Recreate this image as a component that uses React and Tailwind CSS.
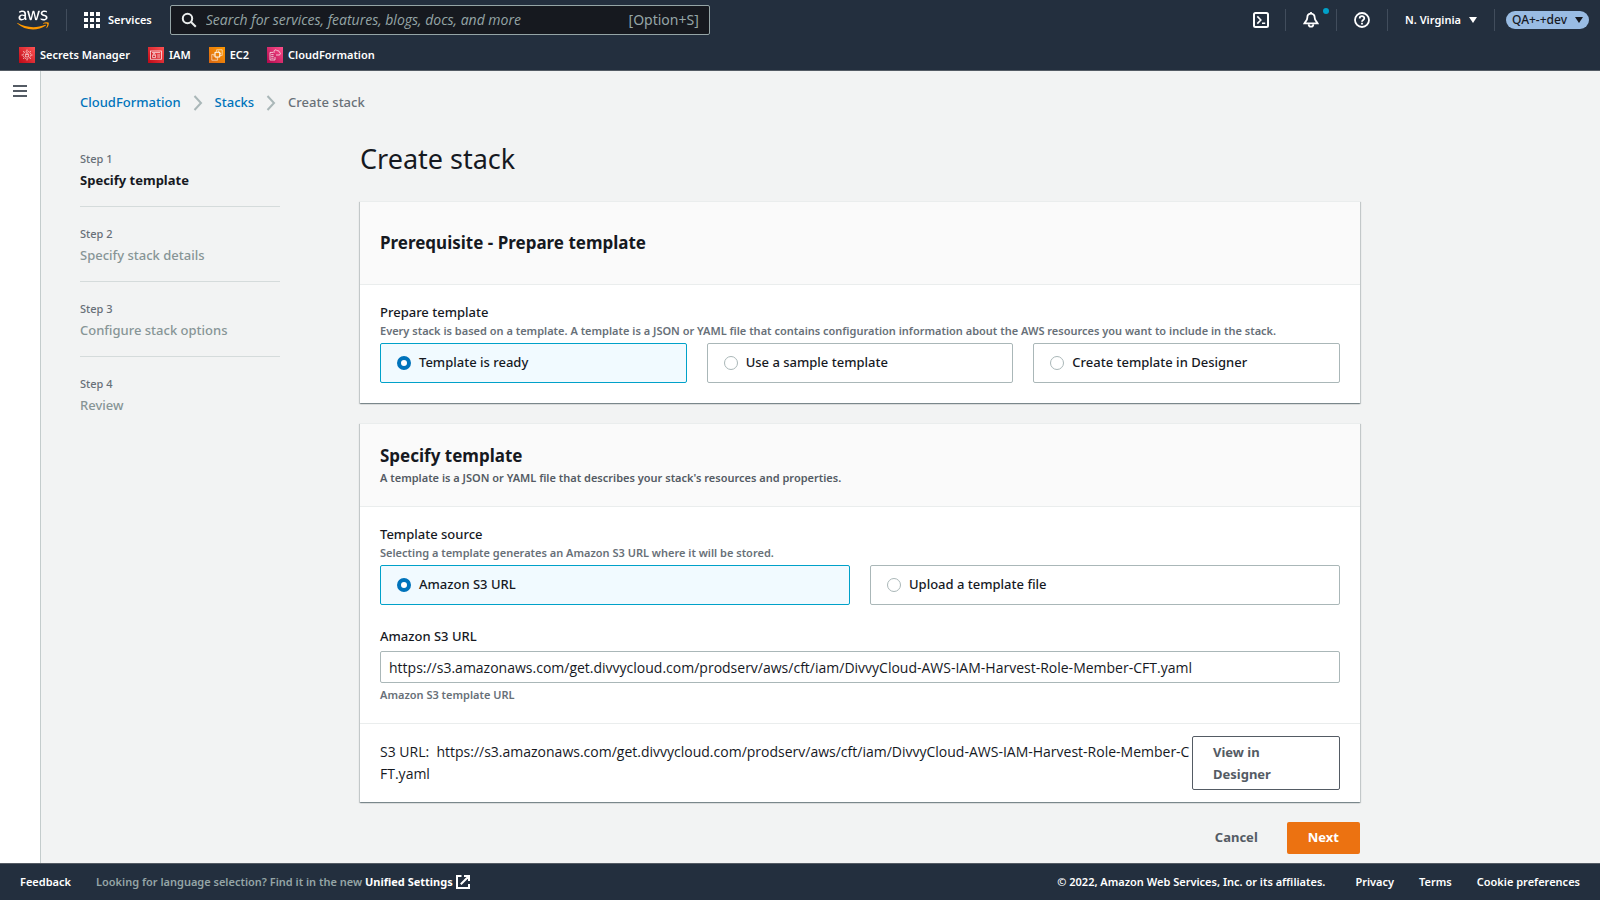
import React, { useState } from "react";

const TEMPLATE_URL =
  "https://s3.amazonaws.com/get.divvycloud.com/prodserv/aws/cft/iam/DivvyCloud-AWS-IAM-Harvest-Role-Member-CFT.yaml";

function AwsLogo() {
  return (
    <svg viewBox="0 0 304 182" className="h-[20px] w-[32px]" aria-hidden="true">
      <path
        fill="#fff"
        d="M86.4 66.4c0 3.7.4 6.7 1.1 8.9.8 2.2 1.8 4.6 3.2 7.2.5.8.7 1.6.7 2.3 0 1-.6 2-1.9 3l-6.3 4.2c-.9.6-1.8.9-2.6.9-1 0-2-.5-3-1.4-1.4-1.5-2.6-3.1-3.6-4.7-1-1.7-2-3.6-3.1-5.9-7.8 9.2-17.6 13.8-29.4 13.8-8.4 0-15.1-2.4-20-7.2-4.9-4.8-7.4-11.2-7.4-19.2 0-8.5 3-15.4 9.1-20.6 6.1-5.2 14.2-7.8 24.5-7.8 3.4 0 6.9.3 10.6.8 3.7.5 7.5 1.3 11.5 2.2v-7.3c0-7.6-1.6-12.9-4.7-16-3.2-3.1-8.6-4.6-16.3-4.6-3.5 0-7.1.4-10.8 1.3-3.7.9-7.3 2-10.8 3.4-1.6.7-2.8 1.1-3.5 1.3-.7.2-1.2.3-1.6.3-1.4 0-2.1-1-2.1-3.1v-4.9c0-1.6.2-2.8.7-3.5.5-.7 1.4-1.4 2.8-2.1 3.5-1.8 7.7-3.3 12.6-4.5C41 1.9 46.2 1.3 51.7 1.3c11.9 0 20.6 2.7 26.2 8.1 5.5 5.4 8.3 13.6 8.3 24.6v32.4zM45.8 81.6c3.3 0 6.7-.6 10.3-1.8 3.6-1.2 6.8-3.4 9.5-6.4 1.6-1.9 2.8-4 3.4-6.4.6-2.4 1-5.3 1-8.7v-4.2c-2.9-.7-6-1.3-9.2-1.7-3.2-.4-6.3-.6-9.4-.6-6.7 0-11.6 1.3-14.9 4-3.3 2.7-4.9 6.5-4.9 11.5 0 4.7 1.2 8.2 3.7 10.6 2.4 2.5 5.9 3.7 10.5 3.7zm80.3 10.8c-1.8 0-3-.3-3.8-1-.8-.6-1.5-2-2.1-3.9L96.7 10.2c-.6-2-.9-3.3-.9-4 0-1.6.8-2.5 2.4-2.5h9.8c1.9 0 3.2.3 3.9 1 .8.6 1.4 2 2 3.9l16.8 66.2 15.6-66.2c.5-2 1.1-3.3 1.9-3.9.8-.6 2.2-1 4-1h8c1.9 0 3.2.3 4 1 .8.6 1.5 2 1.9 3.9l15.8 67 17.3-67c.6-2 1.3-3.3 2-3.9.8-.6 2.1-1 3.9-1h9.3c1.6 0 2.5.8 2.5 2.5 0 .5-.1 1-.2 1.6-.1.6-.3 1.4-.7 2.5l-24.1 77.3c-.6 2-1.3 3.3-2.1 3.9-.8.6-2.1 1-3.8 1h-8.6c-1.9 0-3.2-.3-4-1-.8-.7-1.5-2-1.9-4L156 23l-15.4 64.4c-.5 2-1.1 3.3-1.9 4-.8.7-2.2 1-4 1zm128.5 2.7c-5.2 0-10.4-.6-15.4-1.8-5-1.2-8.9-2.5-11.5-4-1.6-.9-2.7-1.9-3.1-2.8-.4-.9-.6-1.9-.6-2.8v-5.1c0-2.1.8-3.1 2.3-3.1.6 0 1.2.1 1.8.3.6.2 1.5.6 2.5 1 3.4 1.5 7.1 2.7 11 3.5 4 .8 7.9 1.2 11.9 1.2 6.3 0 11.2-1.1 14.6-3.3 3.4-2.2 5.2-5.4 5.2-9.5 0-2.8-.9-5.1-2.7-7-1.8-1.9-5.2-3.6-10.1-5.2L246 52c-7.3-2.3-12.7-5.7-16-10.2-3.3-4.4-5-9.3-5-14.5 0-4.2.9-7.9 2.7-11.1 1.8-3.2 4.2-6 7.2-8.2 3-2.3 6.4-4 10.4-5.2 4-1.2 8.2-1.7 12.6-1.7 2.2 0 4.5.1 6.7.4 2.3.3 4.4.7 6.5 1.1 2 .5 3.9 1 5.7 1.6 1.8.6 3.2 1.2 4.2 1.8 1.4.8 2.4 1.6 3 2.5.6.8.9 1.9.9 3.3v4.7c0 2.1-.8 3.2-2.3 3.2-.8 0-2.1-.4-3.8-1.2-5.7-2.6-12.1-3.9-19.2-3.9-5.7 0-10.2.9-13.3 2.8-3.1 1.9-4.7 4.8-4.7 8.9 0 2.8 1 5.2 3 7.1 2 1.9 5.7 3.8 11 5.5l14.2 4.5c7.2 2.3 12.4 5.5 15.5 9.6 3.1 4.1 4.6 8.8 4.6 14 0 4.3-.9 8.2-2.6 11.6-1.8 3.4-4.2 6.4-7.3 8.8-3.1 2.5-6.8 4.3-11.1 5.6-4.5 1.4-9.2 2.1-14.3 2.1z"
      />
      <path
        fill="#f90"
        d="M273.5 143.7c-32.9 24.3-80.7 37.2-121.8 37.2-57.6 0-109.5-21.3-148.7-56.7-3.1-2.8-.3-6.6 3.4-4.4 42.4 24.6 94.7 39.5 148.8 39.5 36.5 0 76.6-7.6 113.5-23.2 5.5-2.5 10.2 3.6 4.8 7.6zm13.7-15.6c-4.2-5.4-27.8-2.6-38.5-1.3-3.2.4-3.7-2.4-.8-4.5 18.8-13.2 49.7-9.4 53.3-5 3.6 4.5-1 35.4-18.6 50.2-2.7 2.3-5.3 1.1-4.1-1.9 4-9.9 12.9-32.2 8.7-37.5z"
      />
    </svg>
  );
}

function GridIcon() {
  return (
    <svg viewBox="0 0 16 16" className="size-4" fill="#fff" aria-hidden="true">
      {[0, 6, 12].map((y) => [0, 6, 12].map((x) => <rect key={`${x}-${y}`} x={x} y={y} width="4" height="4" />))}
    </svg>
  );
}

function SearchIcon() {
  return (
    <svg viewBox="0 0 16 16" className="size-4 shrink-0" fill="none" stroke="#eaeded" strokeWidth="2" aria-hidden="true">
      <circle cx="6.5" cy="6.5" r="4.7" />
      <path d="M10 10l4.8 4.8" />
    </svg>
  );
}

function SecretsIcon() {
  return (
    <svg viewBox="0 0 16 16" className="size-4" fill="none" stroke="#fff" strokeWidth="0.6" aria-hidden="true">
      <defs>
        <linearGradient id="red" x1="0" y1="1" x2="1" y2="0">
          <stop offset="0" stopColor="#bd0816" />
          <stop offset="1" stopColor="#ff5252" />
        </linearGradient>
      </defs>
      <rect width="16" height="16" fill="url(#red)" stroke="none" />
      <circle cx="8" cy="8" r="3.8" strokeDasharray="1.6 0.7" />
      <path d="M8 2.5v1.6M8 11.9v1.6M2.5 8h1.6M11.9 8h1.6M4.1 4.1l1.1 1.1M10.8 10.8l1.1 1.1M11.9 4.1l-1.1 1.1M5.2 10.8l-1.1 1.1" />
      <path d="M6.4 7.5h3.2v2.4H6.4zM7 7.4V6.6a1 1 0 0 1 2 0v.8" />
    </svg>
  );
}

function IamIcon() {
  return (
    <svg viewBox="0 0 16 16" className="size-4" fill="none" stroke="#fff" strokeWidth="0.7" aria-hidden="true">
      <rect width="16" height="16" fill="url(#red)" stroke="none" />
      <rect x="2.6" y="4" width="10.8" height="8.2" />
      <path d="M4 5.6h8M9.2 8h2.8M9.2 10h2.8" />
      <path d="M4.6 8.2h3v2.4h-3zM5.2 8V7.3a.9.9 0 0 1 1.8 0V8" />
    </svg>
  );
}

function Ec2Icon() {
  return (
    <svg viewBox="0 0 16 16" className="size-4" fill="none" stroke="#fff" strokeWidth="0.6" aria-hidden="true">
      <defs>
        <linearGradient id="orange" x1="0" y1="1" x2="1" y2="0">
          <stop offset="0" stopColor="#d86613" />
          <stop offset="1" stopColor="#ff9900" />
        </linearGradient>
      </defs>
      <rect width="16" height="16" fill="url(#orange)" stroke="none" />
      <rect x="6" y="5.2" width="4.8" height="4.8" rx="0.6" strokeWidth="1.1" />
      <path d="M7.6 4.8V2.8h5.6v5.6h-2.2M5.6 7.4H2.8v5.8h5.8v-3M9.6 3.6V5M12.2 6.4H11M5.4 8.8H4.2M7.2 11.4v-1.2" />
    </svg>
  );
}

function CloudFormationIcon() {
  return (
    <svg viewBox="0 0 16 16" className="size-4" fill="none" stroke="#fff" strokeWidth="0.7" aria-hidden="true">
      <defs>
        <linearGradient id="pink" x1="0" y1="1" x2="1" y2="0">
          <stop offset="0" stopColor="#b0084d" />
          <stop offset="1" stopColor="#ff4f8b" />
        </linearGradient>
      </defs>
      <rect width="16" height="16" fill="url(#pink)" stroke="none" />
      <path d="M6 5.4H3v7.6h5V10M4.2 7.6h2.4M4.2 9.4h2.4M4.2 11.2h2.4" />
      <path d="M7 6V4.6a1.7 1.7 0 0 1 3.2-.8 1.3 1.3 0 0 1 1.9 1.1c1.8.5 1.6 3 0 3.1H9" />
    </svg>
  );
}

function Caret() {
  return (
    <svg viewBox="0 0 8 6" className="h-[6px] w-[8px]" fill="currentColor" aria-hidden="true">
      <path d="M0 0h8L4 6z" />
    </svg>
  );
}

function Chevron() {
  return (
    <svg viewBox="0 0 10 16" className="h-4 w-[10px]" fill="none" stroke="#aab7b8" strokeWidth="2" aria-hidden="true">
      <path d="M1.5 1l6.5 7-6.5 7" />
    </svg>
  );
}

function HeaderDivider() {
  return <span className="h-[22px] w-px bg-[#414d5c]" />;
}

const favorites = [
  { name: "Secrets Manager", Icon: SecretsIcon },
  { name: "IAM", Icon: IamIcon },
  { name: "EC2", Icon: Ec2Icon },
  { name: "CloudFormation", Icon: CloudFormationIcon },
];

function TopNav() {
  return (
    <header className="border-b border-[#545b64] bg-[#232f3e] text-[11px] font-semibold text-white">
      <div className="flex h-10 items-center">
        <a href="#home" aria-label="AWS home" className="mr-[17px] ml-[17px]">
          <AwsLogo />
        </a>
        <HeaderDivider />
        <button type="button" className="ml-[17px] flex items-center gap-2">
          <GridIcon />
          Services
        </button>
        <label className="ml-[18px] flex h-[30px] w-[540px] items-center gap-[9px] rounded-xs border border-[#95a5a6] bg-[#16191f] px-[10px] text-[#95a5a6]">
          <SearchIcon />
          <input
            type="search"
            aria-label="Search"
            placeholder="Search for services, features, blogs, docs, and more"
            className="min-w-0 flex-1 bg-transparent font-['Open_Sans','Noto_Sans',sans-serif] text-sm font-normal outline-none placeholder:text-[#95a5a6] placeholder:italic"
          />
          <span className="text-sm font-normal">[Option+S]</span>
        </label>
        <div className="ml-auto flex items-center">
          <button type="button" aria-label="CloudShell" className="mr-4">
            <svg viewBox="0 0 16 16" className="size-4" fill="none" stroke="#fff" strokeWidth="2" aria-hidden="true">
              <rect x="1" y="1" width="14" height="14" rx="1.5" />
              <path d="M4.3 4.4L7.8 8l-3.5 3.6M9 11.3h3.2" strokeWidth="1.6" />
            </svg>
          </button>
          <HeaderDivider />
          <button type="button" aria-label="Notifications" className="relative mx-[17px]">
            <svg viewBox="0 0 16 16" className="size-4" fill="none" stroke="#fff" strokeWidth="1.8" aria-hidden="true">
              <path d="M8 1.6c-2.600 0-3.700 1.900-3.700 4.200 0 2.900-1.900 3.600-2.900 5.500h13.200c-1-1.900-2.900-2.600-2.900-5.500 0-2.300-1.100-4.200-3.700-4.200z" />
              <path d="M5.7 12.2a2.3 2.5 0 0 0 4.6 0M8 0v2" />
            </svg>
            <span className="absolute -top-1 -right-2.5 size-1.5 rounded-full bg-[#00a1c9]" />
          </button>
          <HeaderDivider />
          <button type="button" aria-label="Help" className="mx-[17px]">
            <svg viewBox="0 0 16 16" className="size-4" fill="none" stroke="#fff" strokeWidth="1.8" aria-hidden="true">
              <circle cx="8" cy="8" r="7" />
              <path d="M5.7 6.5c0-3 4.6-3 4.6-.2C10.3 8 8 7.9 8 9.7M8 10.7v1.9" />
            </svg>
          </button>
          <HeaderDivider />
          <button type="button" className="mx-[17px] flex items-center gap-2">
            N. Virginia
            <Caret />
          </button>
          <HeaderDivider />
          <button
            type="button"
            className="mr-[11px] ml-[11px] flex h-[18px] items-center gap-2 rounded-full bg-[#99bce3] px-1.5 text-xs font-medium text-[#16191f]"
          >
            QA+-+dev
            <Caret />
          </button>
        </div>
      </div>
      <nav aria-label="Favorites" className="flex h-[30px] items-center gap-[18px] px-[19px]">
        {favorites.map(({ name, Icon }) => (
          <a key={name} href="#service" className="flex items-center gap-[5px]">
            <Icon />
            {name}
          </a>
        ))}
      </nav>
    </header>
  );
}

function Breadcrumbs() {
  return (
    <nav aria-label="Breadcrumbs" className="flex h-5 items-center gap-3 text-[13px] font-medium">
      <a href="#cloudformation" className="text-[#0073bb]">CloudFormation</a>
      <Chevron />
      <a href="#stacks" className="text-[#0073bb]">Stacks</a>
      <Chevron />
      <span className="text-[#687078]">Create stack</span>
    </nav>
  );
}

const steps = ["Specify template", "Specify stack details", "Configure stack options", "Review"];

function Steps() {
  return (
    <ol className="w-[200px] shrink-0 pt-[9px]">
      {steps.map((step, i) => (
        <li
          key={step}
          className={i < steps.length - 1 ? "mb-[17px] border-b border-[#d5dbdb] pb-[15px]" : ""}
        >
          <div className="text-[11px] leading-5 font-medium text-[#687078]">Step {i + 1}</div>
          <div className={i === 0 ? "text-[13px] leading-[22px] font-bold text-[#16191f]" : "text-[13px] leading-[22px] font-medium text-[#879596]"}>
            {step}
          </div>
        </li>
      ))}
    </ol>
  );
}

function Card({ title, description, children, footer }) {
  return (
    <section className="border-t border-[#eaeded] bg-white shadow-[0_1px_1px_0_rgba(0,28,36,0.3),1px_1px_1px_0_rgba(0,28,36,0.15),-1px_1px_1px_0_rgba(0,28,36,0.15)]">
      <header className="flex min-h-[83px] flex-col justify-center border-b border-[#eaeded] bg-[#fafafa] px-5 pb-px">
        <h2 className="text-[17px] leading-[26px] font-bold text-[#16191f]">{title}</h2>
        {description && <p className="text-[11px] leading-[18px] font-semibold text-[#545b64]">{description}</p>}
      </header>
      <div className="px-5 pt-4 pb-5">{children}</div>
      {footer && <div className="border-t border-[#eaeded] px-5 py-3">{footer}</div>}
    </section>
  );
}

function TileGroup({ legend, hint, name, options, columns }) {
  const [selected, setSelected] = useState(options[0]);
  return (
    <fieldset>
      <legend className="text-[13px] leading-[22px] font-medium text-[#16191f]">{legend}</legend>
      <p className="text-[11px] leading-4 font-semibold text-[#687078]">{hint}</p>
      <div className={`mt-1 grid gap-5 ${columns}`}>
        {options.map((option) => (
          <label
            key={option}
            className="flex h-10 items-center gap-2 rounded-xs border border-[#aab7b8] bg-white px-4 text-[13px] font-medium text-[#16191f] has-checked:border-[#00a1c9] has-checked:bg-[#f1faff]"
          >
            <input
              type="radio"
              name={name}
              checked={selected === option}
              onChange={() => setSelected(option)}
              className="size-[14px] appearance-none rounded-full border border-[#aab7b8] bg-white checked:border-4 checked:border-[#0073bb]"
            />
            {option}
          </label>
        ))}
      </div>
    </fieldset>
  );
}

function Footer() {
  return (
    <footer className="flex h-[37px] items-center justify-between border-t border-[#545b64] bg-[#232f3e] px-5 text-[11px] font-semibold text-white">
      <div className="flex items-center gap-[25px]">
        <a href="#feedback">Feedback</a>
        <p className="flex items-center text-[#95a5a6]">
          Looking for language selection? Find it in the new&nbsp;
          <a href="#settings" className="flex items-center gap-[3px] font-bold text-white">
            Unified Settings
            <svg viewBox="0 0 14 14" className="size-[14px]" fill="none" stroke="#fff" strokeWidth="2" aria-hidden="true">
              <path d="M5.5 1H1v12h12V9M8 1h5v5M13 1L4.8 9.2" />
            </svg>
          </a>
        </p>
      </div>
      <div className="flex items-center">
        <span className="mr-[30px]">© 2022, Amazon Web Services, Inc. or its affiliates.</span>
        <nav aria-label="Legal" className="flex gap-[25px]">
          <a href="#privacy">Privacy</a>
          <a href="#terms">Terms</a>
          <a href="#cookies">Cookie preferences</a>
        </nav>
      </div>
    </footer>
  );
}

export default function App() {
  return (
    <div className="flex min-h-screen flex-col bg-[#f2f3f3] font-['Noto_Sans','Open_Sans',sans-serif]">
      <TopNav />
      <div className="flex flex-1">
        <aside className="w-[41px] shrink-0 border-r border-[#c4cccc] bg-white">
          <button type="button" aria-label="Open navigation" className="mt-[14px] ml-[13px] block">
            <svg viewBox="0 0 14 12" className="h-[12px] w-[14px]" fill="#545b64" aria-hidden="true">
              <path d="M0 0h14v2H0zM0 5h14v2H0zM0 10h14v2H0z" />
            </svg>
          </button>
        </aside>
        <main className="min-w-0 flex-1 px-[39px] pt-[22px]">
          <Breadcrumbs />
          <div className="mt-[27px] flex gap-20">
            <Steps />
            <form className="max-w-[1000px] min-w-0 flex-1" onSubmit={(e) => e.preventDefault()}>
              <h1 className="pt-px text-[27px] leading-9 text-[#16191f]">Create stack</h1>
              <div className="mt-6 flex flex-col gap-5">
                <Card title="Prerequisite - Prepare template">
                  <TileGroup
                    legend="Prepare template"
                    hint="Every stack is based on a template. A template is a JSON or YAML file that contains configuration information about the AWS resources you want to include in the stack."
                    name="prepare"
                    columns="grid-cols-3"
                    options={["Template is ready", "Use a sample template", "Create template in Designer"]}
                  />
                </Card>
                <Card
                  title="Specify template"
                  description="A template is a JSON or YAML file that describes your stack's resources and properties."
                  footer={
                    <div className="flex items-start justify-between">
                      <p className="min-w-0 flex-1 pt-[5px] font-['Open_Sans','Noto_Sans',sans-serif] text-sm leading-[22px] break-all text-[#16191f]">
                        {`S3 URL:\u00a0 ${TEMPLATE_URL}`}
                      </p>
                      <button
                        type="button"
                        className="w-[148px] shrink-0 rounded-xs border border-[#545b64] bg-white py-1 pr-14 pl-5 text-left text-[13px] leading-[22px] font-bold text-[#545b64]"
                      >
                        View in Designer
                      </button>
                    </div>
                  }
                >
                  <TileGroup
                    legend="Template source"
                    hint="Selecting a template generates an Amazon S3 URL where it will be stored."
                    name="source"
                    columns="grid-cols-2"
                    options={["Amazon S3 URL", "Upload a template file"]}
                  />
                  <div className="mt-5 flex flex-col">
                    <label htmlFor="s3-url" className="text-[13px] leading-[22px] font-medium text-[#16191f]">
                      Amazon S3 URL
                    </label>
                    <input
                      id="s3-url"
                      type="text"
                      defaultValue={TEMPLATE_URL}
                      aria-describedby="s3-url-hint"
                      className="mt-1 h-8 rounded-xs border border-[#aab7b8] bg-white px-2 font-['Open_Sans','Noto_Sans',sans-serif] text-sm text-[#16191f]"
                    />
                    <p id="s3-url-hint" className="mt-1 text-[11px] leading-4 font-semibold text-[#687078]">
                      Amazon S3 template URL
                    </p>
                  </div>
                </Card>
              </div>
              <div className="mt-5 mb-[9px] flex justify-end gap-2 text-[13px] font-bold">
                <button type="button" className="h-8 px-[21px] text-[#545b64]">Cancel</button>
                <button type="submit" className="h-8 rounded-xs bg-[#ec7211] px-[21px] text-white">Next</button>
              </div>
            </form>
          </div>
        </main>
      </div>
      <Footer />
    </div>
  );
}
